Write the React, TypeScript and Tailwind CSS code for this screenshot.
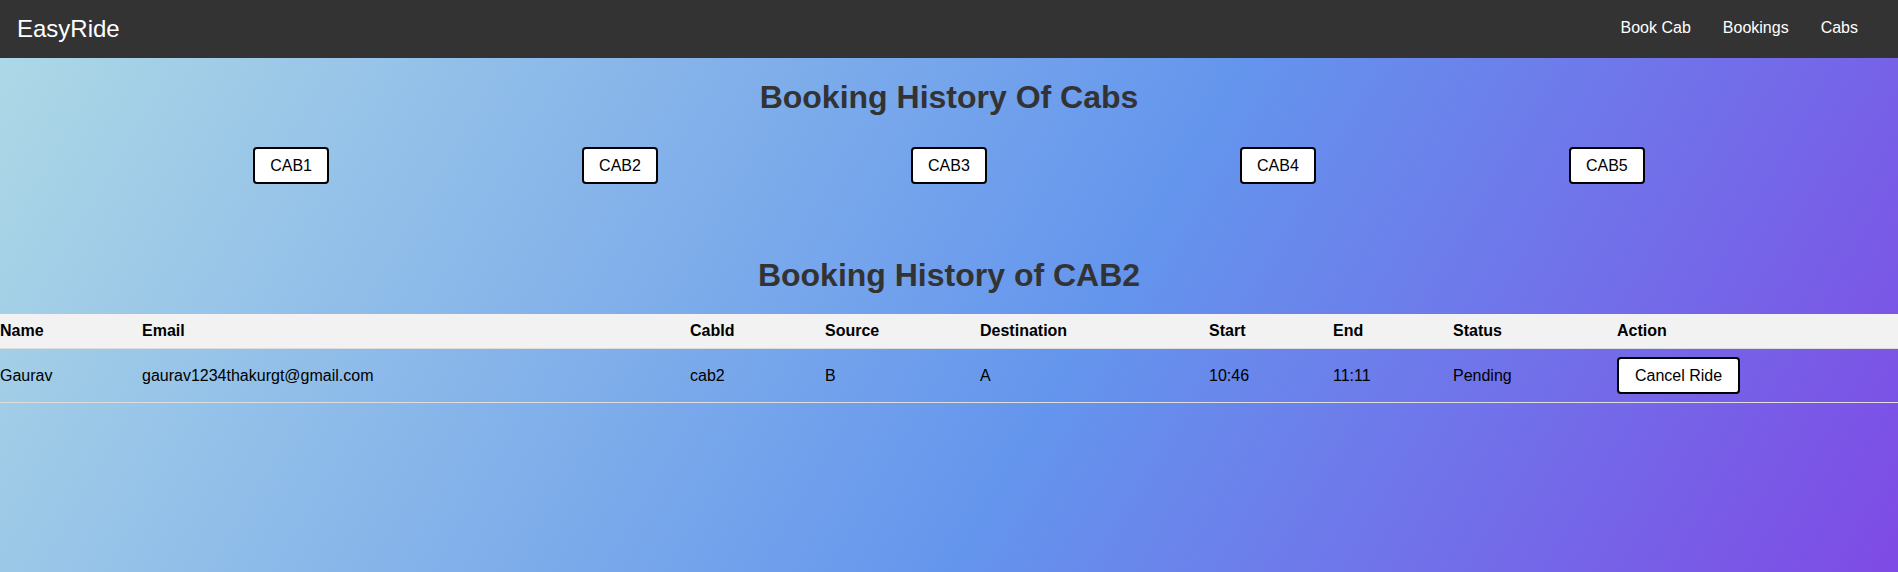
import React from 'react';

const cabs = ['CAB1', 'CAB2', 'CAB3', 'CAB4', 'CAB5'];

const columns = ['Name', 'Email', 'CabId', 'Source', 'Destination', 'Start', 'End', 'Status', 'Action'];

const bookings = [
    {
        name: 'Gaurav',
        email: 'gaurav1234thakurgt@gmail.com',
        cabId: 'cab2',
        source: 'B',
        destination: 'A',
        start: '10:46',
        end: '11:11',
        status: 'Pending',
    },
];

const Navbar: React.FC = () => (
    <nav className="h-[58px] shrink-0 bg-[#333333] flex items-center justify-between pl-[17px] pr-[24px]">
        <span className="text-white text-[24px] leading-[28px]">EasyRide</span>
        <div className="flex items-center pb-[3px]">
            {['Book Cab', 'Bookings', 'Cabs'].map((link) => (
                <a key={link} href="#" className="px-4 text-white text-[16px] leading-[18px]">
                    {link}
                </a>
            ))}
        </div>
    </nav>
);

export default function App() {
    return (
        <div className="min-h-screen flex flex-col font-['Liberation_Sans',Arial,sans-serif]">
            <Navbar />

            <main className="flex-1 bg-[linear-gradient(120deg,#add8e6_0%,#6495ed_57%,#8a2be2_118%)]">
                <h1 className="mt-[21px] text-center text-[32px] leading-[37px] font-bold text-[#333333]">
                    Booking History Of Cabs
                </h1>

                {/* Cab selector */}
                <div className="mt-[31px] flex justify-evenly">
                    {cabs.map((cab) => (
                        <button
                            key={cab}
                            className="h-[37px] px-[15px] bg-white border-2 border-black rounded-[4px] text-[16px] leading-[18px] text-black"
                        >
                            {cab}
                        </button>
                    ))}
                </div>

                <h2 className="mt-[73px] text-center text-[32px] leading-[37px] font-bold text-[#333333]">
                    Booking History of CAB2
                </h2>

                <table className="mt-[20px] w-full table-fixed border-collapse text-[16px] leading-[18px] text-black">
                    <colgroup>
                        <col className="w-[142px]" />
                        <col className="w-[548px]" />
                        <col className="w-[135px]" />
                        <col className="w-[155px]" />
                        <col className="w-[229px]" />
                        <col className="w-[124px]" />
                        <col className="w-[120px]" />
                        <col className="w-[164px]" />
                        <col />
                    </colgroup>
                    <thead>
                        <tr className="bg-[#f2f2f2] border-b border-[#dddddd]">
                            {columns.map((col) => (
                                <th key={col} className="py-2 px-0 text-left font-bold">
                                    {col}
                                </th>
                            ))}
                        </tr>
                    </thead>
                    <tbody>
                        {bookings.map((b) => (
                            <tr key={b.email} className="border-b border-[#dddddd]">
                                <td className="py-2 px-0">{b.name}</td>
                                <td className="py-2 px-0">{b.email}</td>
                                <td className="py-2 px-0">{b.cabId}</td>
                                <td className="py-2 px-0">{b.source}</td>
                                <td className="py-2 px-0">{b.destination}</td>
                                <td className="py-2 px-0">{b.start}</td>
                                <td className="py-2 px-0">{b.end}</td>
                                <td className="py-2 px-0">{b.status}</td>
                                <td className="py-2 px-0">
                                    <button className="h-[37px] px-[16px] bg-white border-2 border-black rounded-[4px] text-[16px] leading-[18px] text-black">
                                        Cancel Ride
                                    </button>
                                </td>
                            </tr>
                        ))}
                    </tbody>
                </table>
            </main>
        </div>
    );
}
